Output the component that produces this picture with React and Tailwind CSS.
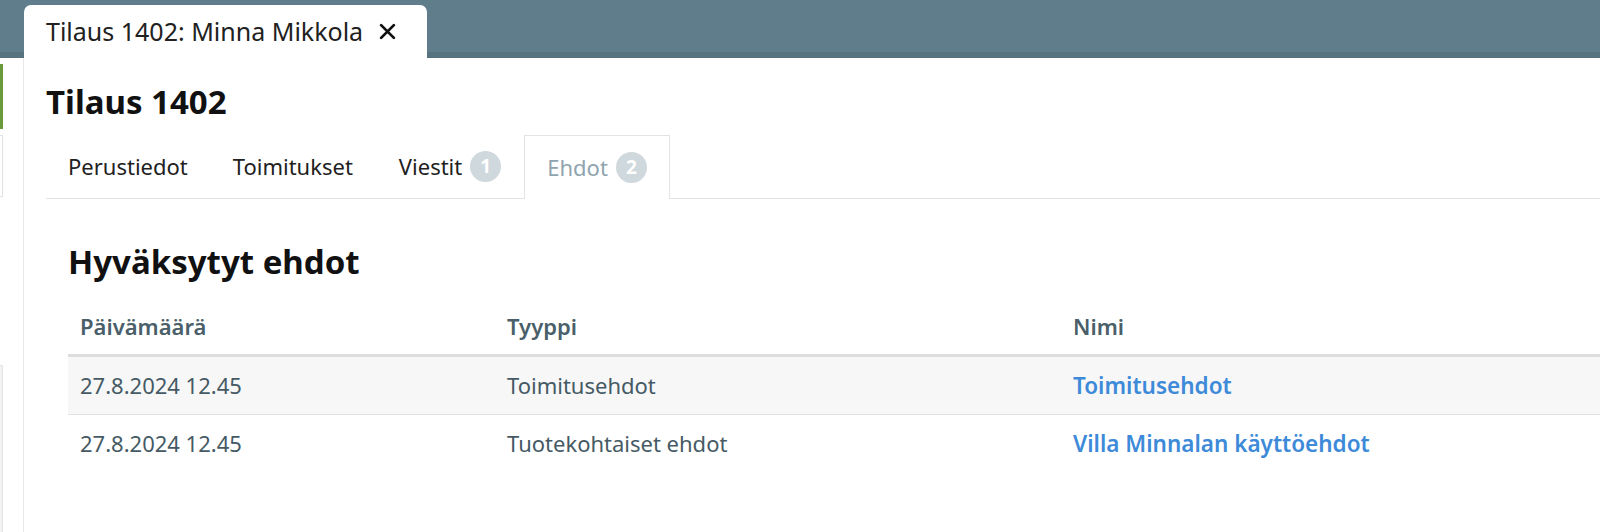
import React from "react";

const font = { fontFamily: '"Noto Sans", "Open Sans", sans-serif' };

function Badge({ n }) {
  return (
    <span className="ml-[8px] inline-flex h-[31px] w-[31px] items-center justify-center rounded-full bg-[#cfd8dc] text-[19px] font-bold text-white">
      {n}
    </span>
  );
}

export default function App() {
  const rows = [
    ["27.8.2024 12.45", "Toimitusehdot", "Toimitusehdot"],
    ["27.8.2024 12.45", "Tuotekohtaiset ehdot", "Villa Minnalan käyttöehdot"],
  ];
  return (
    <div className="flex h-[532px] w-[1600px] flex-col overflow-hidden bg-white" style={font}>
      {/* top bar */}
      <div className="flex h-[58px] shrink-0 items-end bg-[#607d8b] pl-[24px] shadow-[inset_0_-6px_0_#587380]">
        <div className="flex h-[53px] w-[403px] items-center rounded-t-[7px] bg-white pl-[22px] text-[25px] text-[#212121]">
          <span>Tilaus 1402: Minna Mikkola</span>
          <svg className="ml-[16px]" width="17" height="17" viewBox="0 0 16 16">
            <path d="M2 2 L14 14 M14 2 L2 14" stroke="#111" strokeWidth="2.6" strokeLinecap="round" />
          </svg>
        </div>
      </div>

      <div className="flex flex-1">
        {/* left strip */}
        <div className="flex w-[24px] shrink-0 flex-col border-r border-[#e8e8e8]">
          <div className="mt-[6px] h-[65px] w-[3px] bg-[#6a9a3a]" />
          <div className="mt-[6px] h-[62px] w-[3px] border-y border-r border-[#dde2e5]" />
          <div className="mt-[168px] w-[3px] flex-1 border-r border-t border-[#e3e3e3] bg-[#f3f3f3]" />
        </div>

        {/* main */}
        <div className="flex-1 pl-[22px]">
          <h1 className="mt-[22px] text-[33px] font-bold leading-[44px] text-[#111]">Tilaus 1402</h1>

          <div className="mt-[11px] flex h-[64px] border-b border-[#e3e3e3] text-[22px] text-[#212121]">
            <div className="flex items-center px-[22px]">Perustiedot</div>
            <div className="flex items-center px-[23px]">Toimitukset</div>
            <div className="flex items-center px-[23px]">
              Viestit
              <Badge n="1" />
            </div>
            <div className="-mb-px flex items-center border-x border-t border-[#e3e3e3] bg-white px-[22px] text-[#90a4ae]">
              Ehdot
              <Badge n="2" />
            </div>
          </div>

          <div className="pl-[22px]">
            <h2 className="mt-[41px] text-[33px] font-bold leading-[44px] text-[#111]">Hyväksytyt ehdot</h2>

            <div className="mt-[15px] text-[22px] text-[#455a64]">
              <div className="flex h-[58px] items-center border-b-[3px] border-[#dddddd] font-semibold text-[#4a5f69]">
                <div className="w-[427px] pl-[12px]">Päivämäärä</div>
                <div className="w-[566px] pl-[12px]">Tyyppi</div>
                <div className="flex-1 pl-[12px]">Nimi</div>
              </div>
              {rows.map(([d, t, n], i) => (
                <div
                  key={i}
                  className={
                    "flex h-[58px] items-center border-b " +
                    (i === 0 ? "border-[#e2e2e2] bg-[#f7f7f7]" : "border-transparent bg-white")
                  }
                >
                  <div className="w-[427px] pl-[12px]">{d}</div>
                  <div className="w-[566px] pl-[12px]">{t}</div>
                  <div className="flex-1 pl-[12px] text-[22.5px] font-semibold text-[#3d8ad9]">{n}</div>
                </div>
              ))}
            </div>
          </div>
        </div>
      </div>
    </div>
  );
}
